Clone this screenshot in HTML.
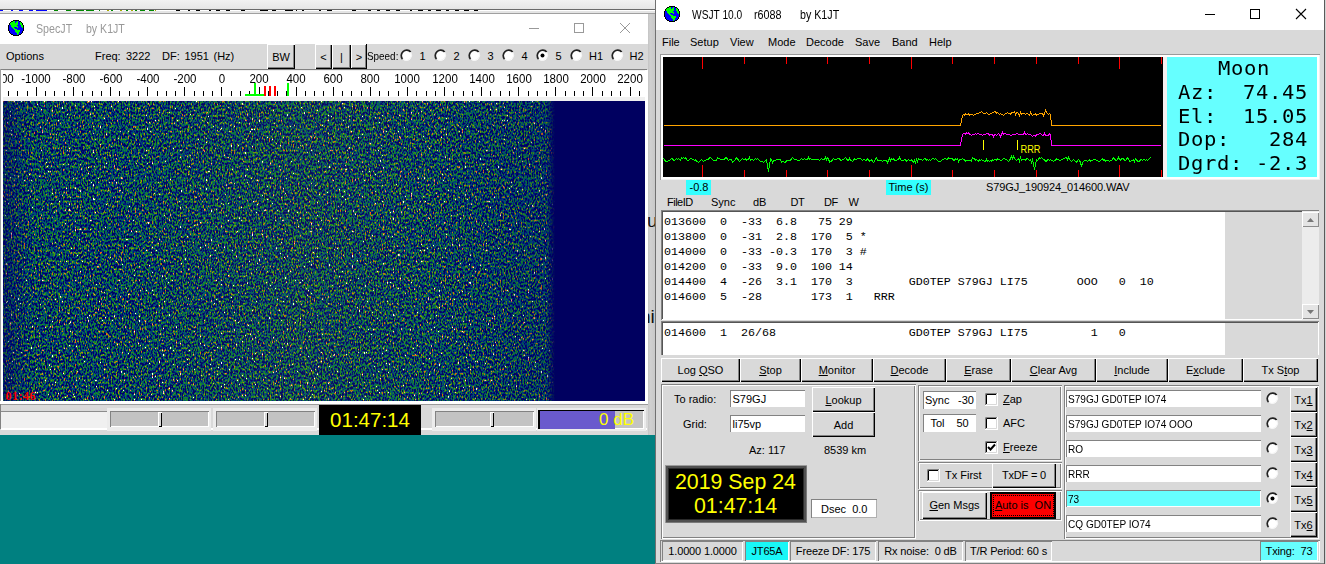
<!DOCTYPE html>
<html><head><meta charset="utf-8"><title>WSJT</title>
<style>
html,body{margin:0;padding:0}
body{width:1326px;height:564px;position:relative;overflow:hidden;background:#f0f0f0;font-family:"Liberation Sans",sans-serif;font-size:12px;color:#000}
body div,body svg{position:absolute;box-sizing:border-box}
.t{white-space:pre;line-height:1}
.b{display:flex;align-items:center;justify-content:center;white-space:pre;font-size:11px}
u{text-decoration:underline}
</style></head><body>

<div style="left:0px;top:435px;width:655px;height:129px;background:#008080"></div>
<div style="left:0px;top:0px;width:655px;height:9px;background:linear-gradient(#f2f2f2,#e6e6e6)"></div>
<div style="left:0px;top:9px;width:655px;height:1px;background:#6a6a6a"></div>
<div style="left:0px;top:10px;width:655px;height:1px;background:#fff"></div>
<div style="left:0px;top:11px;width:655px;height:2px;background:#e4e4e4"></div>
<div style="left:0px;top:13px;width:655px;height:1px;background:#a0a0a0"></div>
<div style="left:0px;top:10px;width:3px;height:1px;background:#00f"></div>
<div style="left:11px;top:10px;width:2px;height:1px;background:#00f"></div>
<div style="left:19px;top:10px;width:4px;height:1px;background:#00f"></div>
<div style="left:29px;top:10px;width:4px;height:1px;background:#00f"></div>
<div style="left:36px;top:10px;width:11px;height:1px;background:#00f"></div>
<div style="left:54px;top:10px;width:4px;height:1px;background:#080"></div>
<div style="left:66px;top:10px;width:5px;height:1px;background:#080"></div>
<div style="left:76px;top:10px;width:8px;height:1px;background:#080"></div>
<div style="left:86px;top:10px;width:8px;height:1px;background:#080"></div>
<div style="left:99px;top:10px;width:1px;height:1px;background:#080"></div>
<div style="left:107px;top:10px;width:2px;height:1px;background:#aa0"></div>
<div style="left:111px;top:10px;width:2px;height:1px;background:#080"></div>
<div style="left:120px;top:10px;width:2px;height:1px;background:#aa0"></div>
<div style="left:126px;top:10px;width:2px;height:1px;background:#080"></div>
<div style="left:131px;top:10px;width:2px;height:1px;background:#aa0"></div>
<div style="left:135px;top:10px;width:2px;height:1px;background:#080"></div>
<div style="left:140px;top:10px;width:5px;height:1px;background:#080"></div>
<div style="left:149px;top:10px;width:5px;height:1px;background:#080"></div>
<div style="left:155px;top:10px;width:1px;height:1px;background:#aa0"></div>
<div style="left:176px;top:10px;width:4px;height:1px;background:#000"></div>
<div style="left:188px;top:10px;width:2px;height:1px;background:#000"></div>
<div style="left:196px;top:10px;width:4px;height:1px;background:#000"></div>
<div style="left:209px;top:10px;width:2px;height:1px;background:#000"></div>
<div style="left:216px;top:10px;width:4px;height:1px;background:#000"></div>
<div style="left:226px;top:10px;width:4px;height:1px;background:#000"></div>
<div style="left:241px;top:10px;width:4px;height:1px;background:#000"></div>
<div style="left:260px;top:10px;width:8px;height:1px;background:#000"></div>
<div style="left:272px;top:10px;width:4px;height:1px;background:#000"></div>
<div style="left:285px;top:10px;width:8px;height:1px;background:#000"></div>
<div style="left:296px;top:10px;width:1px;height:1px;background:#000"></div>
<div style="left:302px;top:10px;width:2px;height:1px;background:#000"></div>
<div style="left:319px;top:10px;width:2px;height:1px;background:#000"></div>
<div style="left:327px;top:10px;width:5px;height:1px;background:#000"></div>
<div style="left:352px;top:10px;width:4px;height:1px;background:#000"></div>
<div style="left:368px;top:10px;width:3px;height:1px;background:#000"></div>
<div style="left:377px;top:10px;width:3px;height:1px;background:#000"></div>
<div style="left:386px;top:10px;width:4px;height:1px;background:#000"></div>
<div style="left:396px;top:10px;width:4px;height:1px;background:#000"></div>
<div style="left:410px;top:10px;width:2px;height:1px;background:#000"></div>
<div style="left:418px;top:10px;width:5px;height:1px;background:#000"></div>
<div style="left:428px;top:10px;width:3px;height:1px;background:#000"></div>
<div style="left:436px;top:10px;width:5px;height:1px;background:#000"></div>
<div style="left:446px;top:10px;width:3px;height:1px;background:#000"></div>
<div style="left:455px;top:10px;width:4px;height:1px;background:#000"></div>
<div style="left:464px;top:10px;width:5px;height:1px;background:#000"></div>
<div style="left:474px;top:10px;width:4px;height:1px;background:#000"></div>
<div style="left:0px;top:14px;width:648px;height:421px;background:#d9d9d9"></div>
<div style="left:0px;top:14px;width:648px;height:30px;background:#fff"></div>
<svg style="left:8px;top:20px" width="16" height="16" viewBox="0 0 16 16" shape-rendering="crispEdges"><path d="M5 0h6v1h-6zM3 1h2v1h-2zM11 1h2v1h-2zM2 2h1v1h-1zM13 2h1v1h-1zM1 3h1v1h-1zM14 3h1v1h-1zM1 4h1v1h-1zM14 4h1v1h-1zM0 5h1v1h-1zM15 5h1v1h-1zM0 6h1v1h-1zM15 6h1v1h-1zM0 7h1v1h-1zM15 7h1v1h-1zM0 8h1v1h-1zM15 8h1v1h-1zM0 9h1v1h-1zM15 9h1v1h-1zM0 10h1v1h-1zM15 10h1v1h-1zM1 11h1v1h-1zM14 11h1v1h-1zM1 12h1v1h-1zM14 12h1v1h-1zM2 13h1v1h-1zM13 13h1v1h-1zM3 14h2v1h-2zM11 14h2v1h-2zM5 15h6v1h-6z" fill="#000"/><path d="M5 1h2v1h-2zM9 1h1v1h-1zM3 2h4v1h-4zM8 2h2v1h-2zM12 2h1v1h-1zM2 3h8v1h-8zM12 3h2v1h-2zM2 4h8v1h-8zM12 4h2v1h-2zM3 5h6v1h-6zM13 5h2v1h-2zM3 6h7v1h-7zM13 6h2v1h-2zM4 7h2v1h-2zM9 7h1v1h-1zM14 7h1v1h-1zM5 8h2v1h-2zM6 9h3v1h-3zM7 10h5v1h-5zM7 11h5v1h-5zM8 12h3v1h-3zM9 13h2v1h-2zM9 14h1v1h-1z" fill="#00ff00"/><path d="M7 1h2v1h-2zM10 1h1v1h-1zM7 2h1v1h-1zM10 2h2v1h-2zM10 3h2v1h-2zM10 4h2v1h-2zM1 5h2v1h-2zM9 5h4v1h-4zM1 6h2v1h-2zM10 6h3v1h-3zM1 7h3v1h-3zM6 7h3v1h-3zM10 7h4v1h-4zM1 8h4v1h-4zM7 8h8v1h-8zM1 9h5v1h-5zM9 9h6v1h-6zM1 10h6v1h-6zM12 10h3v1h-3zM2 11h5v1h-5zM12 11h2v1h-2zM2 12h6v1h-6zM11 12h3v1h-3zM3 13h6v1h-6zM11 13h2v1h-2zM5 14h4v1h-4zM10 14h1v1h-1z" fill="#0000ff"/></svg>
<div class="t" style="left:36px;top:23px;font-size:12px;color:#999;transform:scaleX(0.89);transform-origin:0 0">SpecJT</div>
<div class="t" style="left:85.5px;top:23px;font-size:12px;color:#999;transform:scaleX(0.88);transform-origin:0 0">by K1JT</div>
<svg style="left:520px;top:14px" width="126" height="30" viewBox="0 0 126 30"><path d="M9 14.5 H19" stroke="#999" stroke-width="1"/><rect x="54.5" y="9.5" width="9" height="9" fill="none" stroke="#999"/><path d="M100 9 L110 19 M110 9 L100 19" stroke="#999" stroke-width="1"/></svg>
<div class="t" style="left:6px;top:51px;font-size:11px;color:#000;">Options</div>
<div class="t" style="left:95px;top:51px;font-size:11px;color:#000;">Freq:</div>
<div class="t" style="left:126px;top:51px;font-size:11px;color:#000;">3222</div>
<div class="t" style="left:162px;top:51px;font-size:11px;color:#000;">DF:</div>
<div class="t" style="left:184.5px;top:51px;font-size:11px;color:#000;">1951</div>
<div class="t" style="left:213.5px;top:51px;font-size:11px;color:#000;">(Hz)</div>
<div class="b" style="left:267px;top:44px;width:28px;height:25px;background:#d9d9d9;box-shadow:inset 1px 1px 0 #fff, inset -1px -1px 0 #000, inset -2px -2px 0 #828282;">BW</div>
<div class="b" style="left:315px;top:44px;width:17px;height:25px;background:#d9d9d9;box-shadow:inset 1px 1px 0 #fff, inset -1px -1px 0 #000, inset -2px -2px 0 #828282;">&lt;</div>
<div class="b" style="left:332px;top:44px;width:19px;height:25px;background:#d9d9d9;box-shadow:inset 1px 1px 0 #fff, inset -1px -1px 0 #000, inset -2px -2px 0 #828282;">|</div>
<div class="b" style="left:351px;top:44px;width:16px;height:25px;background:#d9d9d9;box-shadow:inset 1px 1px 0 #fff, inset -1px -1px 0 #000, inset -2px -2px 0 #828282;">&gt;</div>
<div class="t" style="left:366.5px;top:51px;font-size:11px;color:#000;transform:scaleX(0.9);transform-origin:0 0">Speed:</div>
<div style="left:351px;top:44px;width:16px;height:25px;box-shadow:inset -1px -1px 0 #000"></div>
<svg style="left:400px;top:49px" width="13" height="13" viewBox="0 0 13 13"><circle cx="6.5" cy="6.5" r="5.2" fill="#fff"/><path d="M10.7 3.0 A5.2 5.2 0 0 0 2.6 10.2" fill="none" stroke="#222" stroke-width="1.7"/><path d="M10.7 3.0 A5.5 5.5 0 0 1 2.6 10.2" fill="none" stroke="#f6f6f6" stroke-width="1"/></svg>
<div class="t" style="left:419.5px;top:51px;font-size:11px;color:#000;">1</div>
<svg style="left:434px;top:49px" width="13" height="13" viewBox="0 0 13 13"><circle cx="6.5" cy="6.5" r="5.2" fill="#fff"/><path d="M10.7 3.0 A5.2 5.2 0 0 0 2.6 10.2" fill="none" stroke="#222" stroke-width="1.7"/><path d="M10.7 3.0 A5.5 5.5 0 0 1 2.6 10.2" fill="none" stroke="#f6f6f6" stroke-width="1"/></svg>
<div class="t" style="left:453.5px;top:51px;font-size:11px;color:#000;">2</div>
<svg style="left:468px;top:49px" width="13" height="13" viewBox="0 0 13 13"><circle cx="6.5" cy="6.5" r="5.2" fill="#fff"/><path d="M10.7 3.0 A5.2 5.2 0 0 0 2.6 10.2" fill="none" stroke="#222" stroke-width="1.7"/><path d="M10.7 3.0 A5.5 5.5 0 0 1 2.6 10.2" fill="none" stroke="#f6f6f6" stroke-width="1"/></svg>
<div class="t" style="left:487.5px;top:51px;font-size:11px;color:#000;">3</div>
<svg style="left:502px;top:49px" width="13" height="13" viewBox="0 0 13 13"><circle cx="6.5" cy="6.5" r="5.2" fill="#fff"/><path d="M10.7 3.0 A5.2 5.2 0 0 0 2.6 10.2" fill="none" stroke="#222" stroke-width="1.7"/><path d="M10.7 3.0 A5.5 5.5 0 0 1 2.6 10.2" fill="none" stroke="#f6f6f6" stroke-width="1"/></svg>
<div class="t" style="left:521.5px;top:51px;font-size:11px;color:#000;">4</div>
<svg style="left:536px;top:49px" width="13" height="13" viewBox="0 0 13 13"><circle cx="6.5" cy="6.5" r="5.2" fill="#fff"/><path d="M10.7 3.0 A5.2 5.2 0 0 0 2.6 10.2" fill="none" stroke="#222" stroke-width="1.7"/><path d="M10.7 3.0 A5.5 5.5 0 0 1 2.6 10.2" fill="none" stroke="#f6f6f6" stroke-width="1"/><circle cx="6.5" cy="6.5" r="2" fill="#000"/></svg>
<div class="t" style="left:555.5px;top:51px;font-size:11px;color:#000;">5</div>
<svg style="left:570px;top:49px" width="13" height="13" viewBox="0 0 13 13"><circle cx="6.5" cy="6.5" r="5.2" fill="#fff"/><path d="M10.7 3.0 A5.2 5.2 0 0 0 2.6 10.2" fill="none" stroke="#222" stroke-width="1.7"/><path d="M10.7 3.0 A5.5 5.5 0 0 1 2.6 10.2" fill="none" stroke="#f6f6f6" stroke-width="1"/></svg>
<div class="t" style="left:589px;top:51px;font-size:11px;color:#000;">H1</div>
<svg style="left:611px;top:49px" width="13" height="13" viewBox="0 0 13 13"><circle cx="6.5" cy="6.5" r="5.2" fill="#fff"/><path d="M10.7 3.0 A5.2 5.2 0 0 0 2.6 10.2" fill="none" stroke="#222" stroke-width="1.7"/><path d="M10.7 3.0 A5.5 5.5 0 0 1 2.6 10.2" fill="none" stroke="#f6f6f6" stroke-width="1"/></svg>
<div class="t" style="left:629.5px;top:51px;font-size:11px;color:#000;">H2</div>
<div style="left:0px;top:69px;width:647px;height:1px;background:#828282"></div>
<div style="left:0px;top:69px;width:1px;height:335px;background:#a0a0a0"></div>
<div style="left:1px;top:70px;width:2px;height:331px;background:#fff"></div>
<div style="left:2px;top:70px;width:645px;height:27px;background:#fff"></div>
<div style="left:3px;top:70px;width:644px;height:1px;background:#f0f0f0"></div>
<div style="left:645px;top:70px;width:3px;height:331px;background:#fff"></div>
<div style="left:3px;top:97px;width:642px;height:4px;background:#f0f0f0"></div>
<svg style="left:0;top:70px" width="647" height="31" viewBox="0 0 647 31" shape-rendering="crispEdges"><path d="M8.5 21 V26 M17.5 21 V26 M27.5 21 V26 M36.5 17 V26 M45.5 21 V26 M54.5 21 V26 M64.5 21 V26 M73.5 17 V26 M82.5 21 V26 M92.5 21 V26 M101.5 21 V26 M110.5 17 V26 M119.5 21 V26 M129.5 21 V26 M138.5 21 V26 M147.5 17 V26 M157.5 21 V26 M166.5 21 V26 M175.5 21 V26 M184.5 17 V26 M194.5 21 V26 M203.5 21 V26 M212.5 21 V26 M221.5 17 V26 M231.5 21 V26 M240.5 21 V26 M249.5 21 V26 M259.5 17 V26 M268.5 21 V26 M277.5 21 V26 M286.5 21 V26 M296.5 17 V26 M305.5 21 V26 M314.5 21 V26 M323.5 21 V26 M333.5 17 V26 M342.5 21 V26 M351.5 21 V26 M361.5 21 V26 M370.5 17 V26 M379.5 21 V26 M388.5 21 V26 M398.5 21 V26 M407.5 17 V26 M416.5 21 V26 M426.5 21 V26 M435.5 21 V26 M444.5 17 V26 M453.5 21 V26 M463.5 21 V26 M472.5 21 V26 M481.5 17 V26 M490.5 21 V26 M500.5 21 V26 M509.5 21 V26 M518.5 17 V26 M528.5 21 V26 M537.5 21 V26 M546.5 21 V26 M555.5 17 V26 M565.5 21 V26 M574.5 21 V26 M583.5 21 V26 M592.5 17 V26 M602.5 21 V26 M611.5 21 V26 M620.5 21 V26 M630.5 17 V26 M639.5 21 V26" stroke="#000" stroke-width="1" fill="none"/><path d="M245 24h19v2h-19z M254 13h2v13h-2z M287 13h2v13h-2z" fill="#00ff00"/><path d="M264 16h2v10h-2z M269 16h2v10h-2z M274 16h2v10h-2z" fill="#f00"/></svg>
<div style="left:3px;top:0;width:40px;height:90px;overflow:hidden"><div style="left:-3px;top:0"><div class="t" style="left:-30.7px;top:72.5px;width:60px;text-align:center;font-size:12.5px;transform:scaleX(0.92)">-1200</div></div></div>
<div class="t" style="left:6.4px;top:72.5px;width:60px;text-align:center;font-size:12.5px;transform:scaleX(0.92)">-1000</div>
<div class="t" style="left:43.5px;top:72.5px;width:60px;text-align:center;font-size:12.5px;transform:scaleX(0.92)">-800</div>
<div class="t" style="left:80.6px;top:72.5px;width:60px;text-align:center;font-size:12.5px;transform:scaleX(0.92)">-600</div>
<div class="t" style="left:117.8px;top:72.5px;width:60px;text-align:center;font-size:12.5px;transform:scaleX(0.92)">-400</div>
<div class="t" style="left:154.8px;top:72.5px;width:60px;text-align:center;font-size:12.5px;transform:scaleX(0.92)">-200</div>
<div class="t" style="left:191.9px;top:72.5px;width:60px;text-align:center;font-size:12.5px;transform:scaleX(0.92)">0</div>
<div class="t" style="left:229.1px;top:72.5px;width:60px;text-align:center;font-size:12.5px;transform:scaleX(0.92)">200</div>
<div class="t" style="left:266.1px;top:72.5px;width:60px;text-align:center;font-size:12.5px;transform:scaleX(0.92)">400</div>
<div class="t" style="left:303.2px;top:72.5px;width:60px;text-align:center;font-size:12.5px;transform:scaleX(0.92)">600</div>
<div class="t" style="left:340.4px;top:72.5px;width:60px;text-align:center;font-size:12.5px;transform:scaleX(0.92)">800</div>
<div class="t" style="left:377.4px;top:72.5px;width:60px;text-align:center;font-size:12.5px;transform:scaleX(0.92)">1000</div>
<div class="t" style="left:414.6px;top:72.5px;width:60px;text-align:center;font-size:12.5px;transform:scaleX(0.92)">1200</div>
<div class="t" style="left:451.6px;top:72.5px;width:60px;text-align:center;font-size:12.5px;transform:scaleX(0.92)">1400</div>
<div class="t" style="left:488.8px;top:72.5px;width:60px;text-align:center;font-size:12.5px;transform:scaleX(0.92)">1600</div>
<div class="t" style="left:525.9px;top:72.5px;width:60px;text-align:center;font-size:12.5px;transform:scaleX(0.92)">1800</div>
<div class="t" style="left:563.0px;top:72.5px;width:60px;text-align:center;font-size:12.5px;transform:scaleX(0.92)">2000</div>
<div class="t" style="left:600.0px;top:72.5px;width:60px;text-align:center;font-size:12.5px;transform:scaleX(0.92)">2200</div>
<svg style="left:3px;top:101px" width="642" height="300" viewBox="0 0 642 300">
<defs>
<filter id="wf" x="0" y="0" width="100%" height="100%" color-interpolation-filters="sRGB">
<feTurbulence type="fractalNoise" baseFrequency="0.61 0.43" numOctaves="1" seed="11" result="a"/>
<feTurbulence type="fractalNoise" baseFrequency="0.83 0.47" numOctaves="1" seed="5" result="b"/>
<feTurbulence type="fractalNoise" baseFrequency="0.71 0.37" numOctaves="1" seed="23" result="c"/>
<feComposite in="a" in2="b" operator="arithmetic" k1="0" k2="0.5" k3="0.5" k4="0" result="ab"/>
<feComposite in="ab" in2="c" operator="arithmetic" k1="0" k2="0.667" k3="0.333" k4="0"/>
<feColorMatrix type="matrix" values="2.94 0 0 0 -0.97  2.94 0 0 0 -0.97  2.94 0 0 0 -0.97  0 0 0 0 1"/>
<feComponentTransfer>
<feFuncR type="table" tableValues="0.000 0.000 0.000 0.000 0.000 0.000 0.000 0.000 0.000 0.000 0.000 0.000 0.012 0.047 0.110 0.216 0.431 0.725 0.961 1.000 1.000"/>
<feFuncG type="table" tableValues="0.000 0.000 0.000 0.000 0.000 0.000 0.000 0.024 0.078 0.165 0.259 0.353 0.439 0.502 0.541 0.573 0.580 0.510 0.333 0.588 1.000"/>
<feFuncB type="table" tableValues="0.392 0.392 0.392 0.392 0.392 0.392 0.392 0.416 0.463 0.502 0.494 0.424 0.298 0.196 0.137 0.098 0.055 0.039 0.078 0.510 1.000"/>
</feComponentTransfer>
</filter>
<linearGradient id="lf" x1="0" x2="1"><stop offset="0" stop-color="#000060" stop-opacity="0"/><stop offset="1" stop-color="#000060" stop-opacity="1"/></linearGradient>
<linearGradient id="le" x1="0" x2="1"><stop offset="0" stop-color="#000060" stop-opacity="0.45"/><stop offset="1" stop-color="#000060" stop-opacity="0"/></linearGradient>
<linearGradient id="lr" x1="0" x2="1"><stop offset="0" stop-color="#000060" stop-opacity="0"/><stop offset="1" stop-color="#000060" stop-opacity="0.22"/></linearGradient>
<linearGradient id="lm" x1="0" x2="1"><stop offset="0" stop-color="#889010" stop-opacity="0"/><stop offset="0.5" stop-color="#889010" stop-opacity="0.09"/><stop offset="1" stop-color="#889010" stop-opacity="0"/></linearGradient>
</defs>
<rect width="642" height="302" fill="#000060"/>
<rect width="556" height="302" filter="url(#wf)"/>
<rect x="0" width="28" height="302" fill="url(#le)"/>
<rect x="430" width="122" height="302" fill="url(#lr)"/>
<rect x="120" width="360" height="302" fill="url(#lm)"/>
<rect x="543" width="9" height="302" fill="url(#lf)"/>
<rect x="552" width="90" height="302" fill="#000060"/>
<text x="2.5" y="299" font-family="Liberation Serif,serif" font-size="12" font-weight="bold" fill="#f00" textLength="30">01:46</text>
</svg>
<div style="left:0px;top:401px;width:648px;height:3px;background:#fff"></div>
<div style="left:0px;top:404px;width:648px;height:1px;background:#9a9a9a"></div>
<div style="left:0px;top:404px;width:1px;height:25px;background:#828282"></div>
<div style="left:1px;top:411px;width:106px;height:1px;background:#8c8c8c"></div>
<div style="left:1px;top:412px;width:106px;height:16px;background:#f0f0f0"></div>
<div style="left:1px;top:428px;width:646px;height:2px;background:#fff"></div>
<div style="left:107px;top:408px;width:104px;height:23px;background:#ececec"></div>
<div style="left:110px;top:411px;width:99px;height:16px;background:#c3c3c3;box-shadow:inset 1px 1px 0 #828282, inset -1px -1px 0 #fff"></div>
<div style="left:158px;top:412px;width:4px;height:15px;background:#d9d9d9;box-shadow:inset 1px 1px 0 #fff, inset -1px -1px 0 #000"></div>
<div style="left:213px;top:408px;width:104px;height:23px;background:#ececec"></div>
<div style="left:216px;top:411px;width:99px;height:16px;background:#c3c3c3;box-shadow:inset 1px 1px 0 #828282, inset -1px -1px 0 #fff"></div>
<div style="left:264px;top:412px;width:4px;height:15px;background:#d9d9d9;box-shadow:inset 1px 1px 0 #fff, inset -1px -1px 0 #000"></div>
<div style="left:432px;top:408px;width:104px;height:23px;background:#ececec"></div>
<div style="left:435px;top:411px;width:99px;height:16px;background:#c3c3c3;box-shadow:inset 1px 1px 0 #828282, inset -1px -1px 0 #fff"></div>
<div style="left:490px;top:412px;width:4px;height:15px;background:#d9d9d9;box-shadow:inset 1px 1px 0 #fff, inset -1px -1px 0 #000"></div>
<div style="left:319px;top:405px;width:102px;height:30px;background:#000"></div>
<div class="t" style="left:319px;top:410px;width:102px;text-align:center;font-size:20.5px;color:#ff0">01:47:14</div>
<div style="left:537px;top:408px;width:109px;height:23px;background:#ececec"></div>
<div style="left:538px;top:410px;width:106px;height:19px;background:#c3c3c3;box-shadow:inset 2px 1px 0 #000, inset -1px -1px 0 #fff"></div>
<div style="left:540px;top:411px;width:75px;height:18px;background:#6a5acd"></div>
<div class="t" style="left:540px;top:411px;width:94px;text-align:right;font-size:17px;color:#ff0">0 dB</div>
<div style="left:648px;top:14px;width:7px;height:421px;background:linear-gradient(90deg,#c4c4c4,#d0d0d0 30%,#c8c8c8);overflow:hidden"><div class="t" style="left:-1px;top:197px;font-size:19px;color:#111">u</div><div class="t" style="left:-8px;top:292.6px;font-size:19px;color:#111">his</div></div>
<div style="left:655px;top:0px;width:1px;height:564px;background:#707070"></div>
<div style="left:656px;top:0px;width:668px;height:564px;background:#d9d9d9"></div>
<div style="left:656px;top:0px;width:668px;height:30px;background:#fff"></div>
<svg style="left:664px;top:6px" width="16" height="16" viewBox="0 0 16 16" shape-rendering="crispEdges"><path d="M5 0h6v1h-6zM3 1h2v1h-2zM11 1h2v1h-2zM2 2h1v1h-1zM13 2h1v1h-1zM1 3h1v1h-1zM14 3h1v1h-1zM1 4h1v1h-1zM14 4h1v1h-1zM0 5h1v1h-1zM15 5h1v1h-1zM0 6h1v1h-1zM15 6h1v1h-1zM0 7h1v1h-1zM15 7h1v1h-1zM0 8h1v1h-1zM15 8h1v1h-1zM0 9h1v1h-1zM15 9h1v1h-1zM0 10h1v1h-1zM15 10h1v1h-1zM1 11h1v1h-1zM14 11h1v1h-1zM1 12h1v1h-1zM14 12h1v1h-1zM2 13h1v1h-1zM13 13h1v1h-1zM3 14h2v1h-2zM11 14h2v1h-2zM5 15h6v1h-6z" fill="#000"/><path d="M5 1h2v1h-2zM9 1h1v1h-1zM3 2h4v1h-4zM8 2h2v1h-2zM12 2h1v1h-1zM2 3h8v1h-8zM12 3h2v1h-2zM2 4h8v1h-8zM12 4h2v1h-2zM3 5h6v1h-6zM13 5h2v1h-2zM3 6h7v1h-7zM13 6h2v1h-2zM4 7h2v1h-2zM9 7h1v1h-1zM14 7h1v1h-1zM5 8h2v1h-2zM6 9h3v1h-3zM7 10h5v1h-5zM7 11h5v1h-5zM8 12h3v1h-3zM9 13h2v1h-2zM9 14h1v1h-1z" fill="#00ff00"/><path d="M7 1h2v1h-2zM10 1h1v1h-1zM7 2h1v1h-1zM10 2h2v1h-2zM10 3h2v1h-2zM10 4h2v1h-2zM1 5h2v1h-2zM9 5h4v1h-4zM1 6h2v1h-2zM10 6h3v1h-3zM1 7h3v1h-3zM6 7h3v1h-3zM10 7h4v1h-4zM1 8h4v1h-4zM7 8h8v1h-8zM1 9h5v1h-5zM9 9h6v1h-6zM1 10h6v1h-6zM12 10h3v1h-3zM2 11h5v1h-5zM12 11h2v1h-2zM2 12h6v1h-6zM11 12h3v1h-3zM3 13h6v1h-6zM11 13h2v1h-2zM5 14h4v1h-4zM10 14h1v1h-1z" fill="#0000ff"/></svg>
<div class="t" style="left:691.5px;top:9px;font-size:12px;color:#000;transform:scaleX(0.85);transform-origin:0 0">WSJT 10.0</div>
<div class="t" style="left:754px;top:9px;font-size:12px;color:#000;transform:scaleX(0.9);transform-origin:0 0">r6088</div>
<div class="t" style="left:800.3px;top:9px;font-size:12px;color:#000;transform:scaleX(0.89);transform-origin:0 0">by K1JT</div>
<svg style="left:1190px;top:0px" width="134" height="30" viewBox="0 0 134 30"><path d="M15 14.5 H25" stroke="#000" stroke-width="1"/><rect x="60.5" y="9.5" width="9" height="9" fill="none" stroke="#000"/><path d="M106 9 L116 19 M116 9 L106 19" stroke="#000" stroke-width="1.1"/></svg>
<div class="t" style="left:662px;top:37px;font-size:11px;color:#000;">File</div>
<div class="t" style="left:690px;top:37px;font-size:11px;color:#000;">Setup</div>
<div class="t" style="left:730px;top:37px;font-size:11px;color:#000;">View</div>
<div class="t" style="left:768px;top:37px;font-size:11px;color:#000;">Mode</div>
<div class="t" style="left:806px;top:37px;font-size:11px;color:#000;">Decode</div>
<div class="t" style="left:855px;top:37px;font-size:11px;color:#000;">Save</div>
<div class="t" style="left:892px;top:37px;font-size:11px;color:#000;">Band</div>
<div class="t" style="left:929px;top:37px;font-size:11px;color:#000;">Help</div>
<div style="left:660px;top:54px;width:660px;height:126px;background:#fff;box-shadow:inset 1px 1px 0 #9a9a9a, inset -1px -1px 0 #f0f0f0"></div>
<svg style="left:663px;top:57px" width="500" height="120" viewBox="0 0 500 120"><rect width="500" height="120" fill="#000"/><path d="M39.5 0 V12 M39.5 108 V120 M81.5 0 V7 M81.5 113 V120 M123.5 0 V7 M123.5 113 V120 M164.5 0 V7 M164.5 113 V120 M206.5 0 V7 M206.5 113 V120 M248.5 0 V12 M248.5 108 V120 M289.5 0 V7 M289.5 113 V120 M331.5 0 V7 M331.5 113 V120 M373.5 0 V7 M373.5 113 V120 M415.5 0 V7 M415.5 113 V120 M456.5 0 V12 M456.5 108 V120 M498.5 0 V7 M498.5 113 V120" stroke="#f00" stroke-width="1" fill="none"/><g shape-rendering="crispEdges"><polyline points="0.5,68.5 297.5,68.5 298.5,63.5 299.5,58.5 300.5,57.5 301.5,58.5 302.5,56.5 303.5,57.5 304.5,57.5 305.5,56.5 306.5,58.5 307.5,57.5 308.5,57.5 309.5,57.5 310.5,58.5 311.5,57.5 312.5,57.5 313.5,56.5 314.5,56.5 315.5,56.5 316.5,55.5 317.5,55.5 318.5,54.5 319.5,55.5 320.5,56.5 321.5,56.5 322.5,56.5 323.5,55.5 324.5,56.5 325.5,57.5 326.5,57.5 327.5,56.5 328.5,56.5 329.5,55.5 330.5,55.5 331.5,54.5 332.5,54.5 333.5,56.5 334.5,55.5 335.5,56.5 336.5,57.5 337.5,56.5 338.5,57.5 339.5,57.5 340.5,58.5 341.5,57.5 342.5,56.5 343.5,56.5 344.5,55.5 345.5,56.5 346.5,56.5 347.5,57.5 348.5,55.5 349.5,55.5 350.5,55.5 351.5,54.5 352.5,57.5 353.5,55.5 354.5,55.5 355.5,56.5 356.5,58.5 357.5,55.5 358.5,57.5 359.5,56.5 360.5,56.5 361.5,56.5 362.5,57.5 363.5,56.5 364.5,56.5 365.5,57.5 366.5,58.5 367.5,55.5 368.5,57.5 369.5,58.5 370.5,57.5 371.5,57.5 372.5,56.5 373.5,58.5 374.5,57.5 375.5,57.5 376.5,56.5 377.5,56.5 378.5,56.5 379.5,56.5 380.5,58.5 381.5,56.5 382.5,53.5 383.5,55.5 384.5,56.5 385.5,57.5 386.5,56.5 387.5,57.5 388.5,68.5 497.5,68.5" fill="none" stroke="#ffa500" stroke-width="1"/><polyline points="0.5,88.5 297.5,88.5 298.5,82.5 299.5,77.5 300.5,76.5 301.5,76.5 302.5,77.5 303.5,75.5 304.5,76.5 305.5,75.5 306.5,77.5 307.5,77.5 308.5,78.5 309.5,77.5 310.5,77.5 311.5,77.5 312.5,76.5 313.5,77.5 314.5,76.5 315.5,76.5 316.5,77.5 317.5,77.5 318.5,77.5 319.5,78.5 320.5,77.5 321.5,77.5 322.5,77.5 323.5,76.5 324.5,76.5 325.5,76.5 326.5,78.5 327.5,77.5 328.5,77.5 329.5,77.5 330.5,79.5 331.5,77.5 332.5,77.5 333.5,78.5 334.5,77.5 335.5,76.5 336.5,77.5 337.5,79.5 338.5,77.5 339.5,75.5 340.5,77.5 341.5,76.5 342.5,76.5 343.5,77.5 344.5,77.5 345.5,77.5 346.5,77.5 347.5,78.5 348.5,78.5 349.5,77.5 350.5,77.5 351.5,77.5 352.5,77.5 353.5,76.5 354.5,76.5 355.5,77.5 356.5,77.5 357.5,77.5 358.5,77.5 359.5,77.5 360.5,77.5 361.5,75.5 362.5,77.5 363.5,77.5 364.5,76.5 365.5,77.5 366.5,77.5 367.5,77.5 368.5,78.5 369.5,79.5 370.5,78.5 371.5,78.5 372.5,79.5 373.5,77.5 374.5,77.5 375.5,77.5 376.5,76.5 377.5,76.5 378.5,77.5 379.5,78.5 380.5,78.5 381.5,76.5 382.5,78.5 383.5,78.5 384.5,78.5 385.5,78.5 386.5,76.5 387.5,77.5 388.5,88.5 497.5,88.5" fill="none" stroke="#ff00ff" stroke-width="1"/><polyline points="0.5,101.5 1.5,102.5 2.5,104.5 3.5,104.5 4.5,104.5 5.5,103.5 6.5,103.5 7.5,102.5 8.5,101.5 9.5,101.5 10.5,103.5 11.5,103.5 12.5,102.5 13.5,101.5 14.5,102.5 15.5,101.5 16.5,102.5 17.5,103.5 18.5,100.5 19.5,101.5 20.5,100.5 21.5,101.5 22.5,100.5 23.5,102.5 24.5,103.5 25.5,103.5 26.5,102.5 27.5,101.5 28.5,101.5 29.5,102.5 30.5,102.5 31.5,103.5 32.5,102.5 33.5,104.5 34.5,104.5 35.5,105.5 36.5,104.5 37.5,103.5 38.5,102.5 39.5,103.5 40.5,104.5 41.5,103.5 42.5,103.5 43.5,102.5 44.5,102.5 45.5,102.5 46.5,100.5 47.5,100.5 48.5,101.5 49.5,102.5 50.5,103.5 51.5,103.5 52.5,103.5 53.5,103.5 54.5,100.5 55.5,101.5 56.5,101.5 57.5,102.5 58.5,102.5 59.5,102.5 60.5,102.5 61.5,102.5 62.5,100.5 63.5,100.5 64.5,102.5 65.5,103.5 66.5,102.5 67.5,102.5 68.5,102.5 69.5,105.5 70.5,104.5 71.5,103.5 72.5,102.5 73.5,100.5 74.5,101.5 75.5,103.5 76.5,104.5 77.5,103.5 78.5,102.5 79.5,101.5 80.5,102.5 81.5,102.5 82.5,101.5 83.5,103.5 84.5,102.5 85.5,102.5 86.5,100.5 87.5,103.5 88.5,102.5 89.5,102.5 90.5,103.5 91.5,102.5 92.5,101.5 93.5,102.5 94.5,101.5 95.5,102.5 96.5,103.5 97.5,104.5 98.5,104.5 99.5,104.5 100.5,105.5 101.5,104.5 102.5,103.5 103.5,102.5 104.5,108.5 105.5,114.5 106.5,108.5 107.5,101.5 108.5,102.5 109.5,105.5 110.5,103.5 111.5,103.5 112.5,103.5 113.5,102.5 114.5,102.5 115.5,102.5 116.5,102.5 117.5,102.5 118.5,105.5 119.5,104.5 120.5,104.5 121.5,105.5 122.5,105.5 123.5,103.5 124.5,103.5 125.5,103.5 126.5,103.5 127.5,103.5 128.5,101.5 129.5,100.5 130.5,101.5 131.5,102.5 132.5,102.5 133.5,102.5 134.5,103.5 135.5,103.5 136.5,103.5 137.5,102.5 138.5,101.5 139.5,102.5 140.5,102.5 141.5,101.5 142.5,102.5 143.5,102.5 144.5,102.5 145.5,100.5 146.5,102.5 147.5,101.5 148.5,102.5 149.5,102.5 150.5,102.5 151.5,102.5 152.5,102.5 153.5,102.5 154.5,102.5 155.5,102.5 156.5,103.5 157.5,102.5 158.5,101.5 159.5,102.5 160.5,102.5 161.5,102.5 162.5,100.5 163.5,102.5 164.5,100.5 165.5,101.5 166.5,105.5 167.5,104.5 168.5,104.5 169.5,102.5 170.5,101.5 171.5,102.5 172.5,102.5 173.5,102.5 174.5,101.5 175.5,101.5 176.5,101.5 177.5,103.5 178.5,103.5 179.5,102.5 180.5,102.5 181.5,101.5 182.5,100.5 183.5,101.5 184.5,103.5 185.5,103.5 186.5,101.5 187.5,103.5 188.5,103.5 189.5,104.5 190.5,103.5 191.5,101.5 192.5,102.5 193.5,102.5 194.5,101.5 195.5,101.5 196.5,101.5 197.5,101.5 198.5,102.5 199.5,103.5 200.5,102.5 201.5,102.5 202.5,103.5 203.5,103.5 204.5,101.5 205.5,102.5 206.5,104.5 207.5,103.5 208.5,102.5 209.5,104.5 210.5,105.5 211.5,104.5 212.5,101.5 213.5,100.5 214.5,103.5 215.5,103.5 216.5,103.5 217.5,103.5 218.5,103.5 219.5,104.5 220.5,103.5 221.5,103.5 222.5,103.5 223.5,103.5 224.5,105.5 225.5,103.5 226.5,101.5 227.5,103.5 228.5,101.5 229.5,102.5 230.5,101.5 231.5,103.5 232.5,103.5 233.5,103.5 234.5,102.5 235.5,102.5 236.5,100.5 237.5,102.5 238.5,103.5 239.5,103.5 240.5,103.5 241.5,102.5 242.5,102.5 243.5,104.5 244.5,103.5 245.5,102.5 246.5,103.5 247.5,103.5 248.5,102.5 249.5,104.5 250.5,105.5 251.5,103.5 252.5,105.5 253.5,102.5 254.5,104.5 255.5,101.5 256.5,102.5 257.5,102.5 258.5,102.5 259.5,103.5 260.5,102.5 261.5,101.5 262.5,101.5 263.5,103.5 264.5,102.5 265.5,103.5 266.5,102.5 267.5,103.5 268.5,102.5 269.5,101.5 270.5,101.5 271.5,102.5 272.5,101.5 273.5,102.5 274.5,103.5 275.5,104.5 276.5,104.5 277.5,104.5 278.5,103.5 279.5,102.5 280.5,102.5 281.5,101.5 282.5,101.5 283.5,102.5 284.5,102.5 285.5,100.5 286.5,101.5 287.5,101.5 288.5,101.5 289.5,101.5 290.5,103.5 291.5,103.5 292.5,101.5 293.5,102.5 294.5,101.5 295.5,104.5 296.5,102.5 297.5,102.5 298.5,102.5 299.5,101.5 300.5,102.5 301.5,102.5 302.5,104.5 303.5,103.5 304.5,103.5 305.5,103.5 306.5,103.5 307.5,103.5 308.5,104.5 309.5,100.5 310.5,101.5 311.5,101.5 312.5,103.5 313.5,102.5 314.5,103.5 315.5,104.5 316.5,102.5 317.5,103.5 318.5,102.5 319.5,103.5 320.5,103.5 321.5,104.5 322.5,104.5 323.5,102.5 324.5,104.5 325.5,103.5 326.5,104.5 327.5,103.5 328.5,104.5 329.5,102.5 330.5,103.5 331.5,102.5 332.5,102.5 333.5,103.5 334.5,101.5 335.5,102.5 336.5,102.5 337.5,103.5 338.5,103.5 339.5,102.5 340.5,101.5 341.5,101.5 342.5,102.5 343.5,102.5 344.5,103.5 345.5,104.5 346.5,103.5 347.5,101.5 348.5,99.5 349.5,101.5 350.5,99.5 351.5,101.5 352.5,102.5 353.5,103.5 354.5,102.5 355.5,101.5 356.5,104.5 357.5,100.5 358.5,103.5 359.5,102.5 360.5,102.5 361.5,102.5 362.5,103.5 363.5,101.5 364.5,101.5 365.5,102.5 366.5,103.5 367.5,102.5 368.5,105.5 369.5,102.5 370.5,107.5 371.5,112.5 372.5,107.5 373.5,102.5 374.5,103.5 375.5,102.5 376.5,100.5 377.5,101.5 378.5,100.5 379.5,101.5 380.5,102.5 381.5,102.5 382.5,104.5 383.5,104.5 384.5,102.5 385.5,102.5 386.5,103.5 387.5,102.5 388.5,103.5 389.5,103.5 390.5,104.5 391.5,103.5 392.5,103.5 393.5,101.5 394.5,102.5 395.5,102.5 396.5,103.5 397.5,103.5 398.5,102.5 399.5,102.5 400.5,101.5 401.5,101.5 402.5,100.5 403.5,100.5 404.5,102.5 405.5,100.5 406.5,102.5 407.5,103.5 408.5,104.5 409.5,103.5 410.5,102.5 411.5,103.5 412.5,104.5 413.5,105.5 414.5,103.5 415.5,102.5 416.5,103.5 417.5,105.5 418.5,109.5 419.5,105.5 420.5,104.5 421.5,103.5 422.5,103.5 423.5,103.5 424.5,104.5 425.5,103.5 426.5,102.5 427.5,104.5 428.5,103.5 429.5,103.5 430.5,102.5 431.5,102.5 432.5,102.5 433.5,103.5 434.5,103.5 435.5,104.5 436.5,104.5 437.5,103.5 438.5,102.5 439.5,101.5 440.5,103.5 441.5,102.5 442.5,104.5 443.5,103.5 444.5,103.5 445.5,103.5 446.5,104.5 447.5,103.5 448.5,103.5 449.5,102.5 450.5,100.5 451.5,101.5 452.5,103.5 453.5,103.5 454.5,102.5 455.5,100.5 456.5,102.5 457.5,103.5 458.5,101.5 459.5,101.5 460.5,101.5 461.5,103.5 462.5,103.5 463.5,102.5 464.5,100.5 465.5,101.5 466.5,104.5 467.5,104.5 468.5,103.5 469.5,103.5 470.5,102.5 471.5,104.5 472.5,101.5 473.5,102.5 474.5,104.5 475.5,104.5 476.5,104.5 477.5,102.5 478.5,102.5 479.5,103.5 480.5,102.5 481.5,102.5 482.5,103.5 483.5,102.5 484.5,103.5 485.5,102.5 486.5,101.5 487.5,100.5" fill="none" stroke="#00ff00" stroke-width="1"/></g><path d="M320.5 83 V93 M354.5 83 V93" stroke="#ff0" stroke-width="1" fill="none"/><text x="357.5" y="96" font-family="Liberation Sans,sans-serif" font-size="11" fill="#ff0" textLength="20" lengthAdjust="spacingAndGlyphs">RRR</text></svg>
<div style="left:1163px;top:57px;width:4px;height:120px;background:#f4f0f0"></div>
<div style="left:1167px;top:57px;width:150px;height:120px;background:#66ffff"></div>
<div class="t" style="left:1218px;top:59.0px;font-family:'DejaVu Sans Mono','Liberation Mono',monospace;font-size:19px;letter-spacing:0.6px;transform:scaleX(1.08);transform-origin:0 0">Moon</div>
<div class="t" style="left:1178px;top:82.75px;font-family:'DejaVu Sans Mono','Liberation Mono',monospace;font-size:19px;letter-spacing:0.6px;transform:scaleX(1.08);transform-origin:0 0">Az:  74.45</div>
<div class="t" style="left:1178px;top:106.5px;font-family:'DejaVu Sans Mono','Liberation Mono',monospace;font-size:19px;letter-spacing:0.6px;transform:scaleX(1.08);transform-origin:0 0">El:  15.05</div>
<div class="t" style="left:1178px;top:130.25px;font-family:'DejaVu Sans Mono','Liberation Mono',monospace;font-size:19px;letter-spacing:0.6px;transform:scaleX(1.08);transform-origin:0 0">Dop:   284</div>
<div class="t" style="left:1178px;top:154.0px;font-family:'DejaVu Sans Mono','Liberation Mono',monospace;font-size:19px;letter-spacing:0.6px;transform:scaleX(1.08);transform-origin:0 0">Dgrd: -2.3</div>
<div style="left:686px;top:180px;width:25px;height:15px;background:#33ffff"></div>
<div class="t" style="left:689.5px;top:182px;font-size:11px;color:#000;">-0.8</div>
<div style="left:886px;top:180px;width:45px;height:15px;background:#33ffff"></div>
<div class="t" style="left:888.5px;top:182px;font-size:11px;color:#000;">Time (s)</div>
<div class="t" style="left:986px;top:182px;font-size:11px;color:#000;letter-spacing:-0.12px">S79GJ_190924_014600.WAV</div>
<div class="t" style="left:667px;top:197px;font-size:11px;color:#000;letter-spacing:-0.5px">FileID</div>
<div class="t" style="left:711px;top:197px;font-size:11px;color:#000;letter-spacing:0px">Sync</div>
<div class="t" style="left:753px;top:197px;font-size:11px;color:#000;letter-spacing:0px">dB</div>
<div class="t" style="left:790.5px;top:197px;font-size:11px;color:#000;letter-spacing:-0.5px">DT</div>
<div class="t" style="left:824px;top:197px;font-size:11px;color:#000;letter-spacing:-0.5px">DF</div>
<div class="t" style="left:848.5px;top:197px;font-size:11px;color:#000;letter-spacing:0px">W</div>
<div style="left:661px;top:210px;width:658px;height:110px;background:#d9d9d9;box-shadow:inset 1px 1px 0 #828282, inset -1px -1px 0 #fff, inset 2px 2px 0 #555"></div>
<div style="left:663px;top:212px;width:562px;height:107px;background:#fff"></div>
<div style="left:661px;top:321px;width:658px;height:34px;background:#d9d9d9;box-shadow:inset 1px 1px 0 #828282, inset -1px 0 0 #fff, inset 2px 2px 0 #555"></div>
<div style="left:663px;top:323px;width:562px;height:32px;background:#fff"></div>
<div class="t" style="left:664px;top:217px;font-family:'Liberation Mono',monospace;font-size:11.667px">013600  0  -33  6.8   75 29</div>
<div class="t" style="left:664px;top:232px;font-family:'Liberation Mono',monospace;font-size:11.667px">013800  0  -31  2.8  170  5 *</div>
<div class="t" style="left:664px;top:247px;font-family:'Liberation Mono',monospace;font-size:11.667px">014000  0  -33 -0.3  170  3 #</div>
<div class="t" style="left:664px;top:262px;font-family:'Liberation Mono',monospace;font-size:11.667px">014200  0  -33  9.0  100 14</div>
<div class="t" style="left:664px;top:277px;font-family:'Liberation Mono',monospace;font-size:11.667px">014400  4  -26  3.1  170  3        GD0TEP S79GJ LI75       OOO   0  10</div>
<div class="t" style="left:664px;top:292px;font-family:'Liberation Mono',monospace;font-size:11.667px">014600  5  -28       173  1   RRR</div>
<div class="t" style="left:664px;top:328px;font-family:'Liberation Mono',monospace;font-size:11.667px">014600  1  26/68                   GD0TEP S79GJ LI75         1   0</div>
<div style="left:1302px;top:211px;width:17px;height:109px;background:#ececec"></div>
<div class="b" style="left:1302px;top:212px;width:17px;height:15px;background:#e4e4e4;box-shadow:inset 1px 1px 0 #fff, inset -1px -1px 0 #8c8c8c;"><svg style="position:static" width="7" height="4" viewBox="0 0 7 4"><path d="M0 4 L3.5 0 L7 4Z" fill="#777"/></svg></div>
<div class="b" style="left:1302px;top:304px;width:17px;height:15px;background:#e4e4e4;box-shadow:inset 1px 1px 0 #fff, inset -1px -1px 0 #8c8c8c;"><svg style="position:static" width="7" height="4" viewBox="0 0 7 4"><path d="M0 0 L3.5 4 L7 0Z" fill="#777"/></svg></div>
<div class="b" style="left:661px;top:358px;width:79px;height:24px;background:#d9d9d9;box-shadow:inset 1px 1px 0 #fff, inset -1px -1px 0 #000, inset -2px -2px 0 #828282;font-size:11px;padding-bottom:1px">Log <u>Q</u>SO</div>
<div class="b" style="left:740px;top:358px;width:61px;height:24px;background:#d9d9d9;box-shadow:inset 1px 1px 0 #fff, inset -1px -1px 0 #000, inset -2px -2px 0 #828282;font-size:11px;padding-bottom:1px"><u>S</u>top</div>
<div class="b" style="left:801px;top:358px;width:72px;height:24px;background:#d9d9d9;box-shadow:inset 1px 1px 0 #fff, inset -1px -1px 0 #000, inset -2px -2px 0 #828282;font-size:11px;padding-bottom:1px"><u>M</u>onitor</div>
<div class="b" style="left:873px;top:358px;width:73px;height:24px;background:#d9d9d9;box-shadow:inset 1px 1px 0 #fff, inset -1px -1px 0 #000, inset -2px -2px 0 #828282;font-size:11px;padding-bottom:1px"><u>D</u>ecode</div>
<div class="b" style="left:946px;top:358px;width:65px;height:24px;background:#d9d9d9;box-shadow:inset 1px 1px 0 #fff, inset -1px -1px 0 #000, inset -2px -2px 0 #828282;font-size:11px;padding-bottom:1px"><u>E</u>rase</div>
<div class="b" style="left:1011px;top:358px;width:85px;height:24px;background:#d9d9d9;box-shadow:inset 1px 1px 0 #fff, inset -1px -1px 0 #000, inset -2px -2px 0 #828282;font-size:11px;padding-bottom:1px"><u>C</u>lear Avg</div>
<div class="b" style="left:1096px;top:358px;width:72px;height:24px;background:#d9d9d9;box-shadow:inset 1px 1px 0 #fff, inset -1px -1px 0 #000, inset -2px -2px 0 #828282;font-size:11px;padding-bottom:1px"><u>I</u>nclude</div>
<div class="b" style="left:1168px;top:358px;width:75px;height:24px;background:#d9d9d9;box-shadow:inset 1px 1px 0 #fff, inset -1px -1px 0 #000, inset -2px -2px 0 #828282;font-size:11px;padding-bottom:1px">E<u>x</u>clude</div>
<div class="b" style="left:1243px;top:358px;width:75px;height:24px;background:#d9d9d9;box-shadow:inset 1px 1px 0 #fff, inset -1px -1px 0 #000, inset -2px -2px 0 #828282;font-size:11px;padding-bottom:1px">Tx S<u>t</u>op</div>
<div style="left:661px;top:384px;width:255px;height:155px;box-shadow:inset 1px 1px 0 #828282, inset -1px -1px 0 #fff, inset 2px 2px 0 #fff, inset -2px -2px 0 #828282;"></div>
<div class="t" style="left:674px;top:394px;font-size:11px;color:#000;">To radio:</div>
<div style="left:730px;top:390px;width:75px;height:17px;background:#fff;box-shadow:inset 1px 1px 0 #828282, inset -1px -1px 0 #fff;"><div class="t" style="left:2.5px;top:4px;font-size:11px">S79GJ</div></div>
<div class="t" style="left:683px;top:419px;font-size:11px;color:#000;">Grid:</div>
<div style="left:730px;top:415px;width:75px;height:17px;background:#fff;box-shadow:inset 1px 1px 0 #828282, inset -1px -1px 0 #fff;"><div class="t" style="left:2.5px;top:4px;font-size:11px">li75vp</div></div>
<div class="b" style="left:812px;top:387px;width:63px;height:25px;background:#d9d9d9;box-shadow:inset 1px 1px 0 #fff, inset -1px -1px 0 #000, inset -2px -2px 0 #828282;font-size:11px"><u>L</u>ookup</div>
<div class="b" style="left:812px;top:412px;width:63px;height:25px;background:#d9d9d9;box-shadow:inset 1px 1px 0 #fff, inset -1px -1px 0 #000, inset -2px -2px 0 #828282;font-size:11px">Add</div>
<div class="t" style="left:749px;top:445px;font-size:11px;color:#000;">Az: 117</div>
<div class="t" style="left:824px;top:445px;font-size:11px;color:#000;">8539 km</div>
<div style="left:665px;top:465px;width:142px;height:58px;background:#000;box-shadow:inset 1px 1px 0 #9a9a9a, inset -1px -1px 0 #7a7a7a, inset 3px 3px 0 #505050, inset -3px -3px 0 #505050, inset 4px 4px 0 #2a2a2a, inset -4px -4px 0 #2a2a2a"></div>
<div class="t" style="left:664px;top:472px;width:143px;text-align:center;font-size:21.33px;color:#ff0">2019 Sep 24</div>
<div class="t" style="left:664px;top:496px;width:143px;text-align:center;font-size:21.33px;color:#ff0">01:47:14</div>
<div style="left:811px;top:499px;width:66px;height:19px;background:#fff;box-shadow:inset 1px 1px 0 #828282, inset -1px -1px 0 #b0b0b0"><div class="t" style="left:10px;top:5px;font-size:11px">Dsec  0.0</div></div>
<div style="left:918px;top:385px;width:144px;height:76px;box-shadow:inset 1px 1px 0 #828282, inset -1px -1px 0 #fff, inset 2px 2px 0 #fff, inset -2px -2px 0 #828282;"></div>
<div style="left:918px;top:462px;width:144px;height:27px;box-shadow:inset 1px 1px 0 #828282, inset -1px -1px 0 #fff, inset 2px 2px 0 #fff, inset -2px -2px 0 #828282;"></div>
<div style="left:918px;top:490px;width:144px;height:31px;box-shadow:inset 1px 1px 0 #828282, inset -1px -1px 0 #fff, inset 2px 2px 0 #fff, inset -2px -2px 0 #828282;"></div>
<div style="left:923px;top:391px;width:53px;height:18px;background:#fff;box-shadow:inset 1px 1px 0 #828282, inset -1px -1px 0 #fff;"><div class="t" style="left:2px;top:4px;font-size:11px">Sync</div><div class="t" style="left:35px;top:4px;font-size:11px">-30</div></div>
<div style="left:923px;top:414px;width:53px;height:18px;background:#fff;box-shadow:inset 1px 1px 0 #828282, inset -1px -1px 0 #fff;"><div class="t" style="left:7.5px;top:4px;font-size:11px">Tol</div><div class="t" style="left:33.5px;top:4px;font-size:11px">50</div></div>
<svg style="left:985px;top:393px" width="13" height="13" viewBox="0 0 13 13"><rect x="0" y="0" width="13" height="13" fill="#fff"/><path d="M0.5 13 V0.5 H13" fill="none" stroke="#828282"/><path d="M1.5 12 V1.5 H12" fill="none" stroke="#000"/><path d="M12.5 0 V12.5 H0" fill="none" stroke="#fff"/><path d="M11.5 1 V11.5 H1" fill="none" stroke="#d9d9d9"/></svg>
<div class="t" style="left:1003px;top:394px;font-size:11px;color:#000;"><u>Z</u>ap</div>
<svg style="left:985px;top:417px" width="13" height="13" viewBox="0 0 13 13"><rect x="0" y="0" width="13" height="13" fill="#fff"/><path d="M0.5 13 V0.5 H13" fill="none" stroke="#828282"/><path d="M1.5 12 V1.5 H12" fill="none" stroke="#000"/><path d="M12.5 0 V12.5 H0" fill="none" stroke="#fff"/><path d="M11.5 1 V11.5 H1" fill="none" stroke="#d9d9d9"/></svg>
<div class="t" style="left:1003px;top:418px;font-size:11px;color:#000;">AFC</div>
<svg style="left:985px;top:441px" width="13" height="13" viewBox="0 0 13 13"><rect x="0" y="0" width="13" height="13" fill="#fff"/><path d="M0.5 13 V0.5 H13" fill="none" stroke="#828282"/><path d="M1.5 12 V1.5 H12" fill="none" stroke="#000"/><path d="M12.5 0 V12.5 H0" fill="none" stroke="#fff"/><path d="M11.5 1 V11.5 H1" fill="none" stroke="#d9d9d9"/><path d="M3 6 L5.5 8.5 L10 3.5" fill="none" stroke="#000" stroke-width="2"/></svg>
<div class="t" style="left:1003px;top:442px;font-size:11px;color:#000;"><u>F</u>reeze</div>
<svg style="left:927px;top:469px" width="13" height="13" viewBox="0 0 13 13"><rect x="0" y="0" width="13" height="13" fill="#fff"/><path d="M0.5 13 V0.5 H13" fill="none" stroke="#828282"/><path d="M1.5 12 V1.5 H12" fill="none" stroke="#000"/><path d="M12.5 0 V12.5 H0" fill="none" stroke="#fff"/><path d="M11.5 1 V11.5 H1" fill="none" stroke="#d9d9d9"/></svg>
<div class="t" style="left:945px;top:470px;font-size:11px;color:#000;">Tx First</div>
<div class="b" style="left:992px;top:463px;width:64px;height:25px;background:#d9d9d9;box-shadow:inset 1px 1px 0 #fff, inset -1px -1px 0 #000, inset -2px -2px 0 #828282;font-size:11px;padding-bottom:2px;letter-spacing:-0.2px">TxDF = 0</div>
<div class="b" style="left:922px;top:492px;width:65px;height:27px;background:#d9d9d9;box-shadow:inset 1px 1px 0 #fff, inset -1px -1px 0 #000, inset -2px -2px 0 #828282;font-size:11px;padding-bottom:1px"><u>G</u>en Msgs</div>
<div class="b" style="left:990px;top:492px;width:66px;height:27px;background:#ff0000;box-shadow:inset 0 0 0 2px #000;font-size:11px;color:#000;padding-bottom:1px"><u>A</u>uto is  ON</div>
<div style="left:993px;top:495px;width:61px;height:21px;border:1px dotted #000"></div>
<div style="left:1064px;top:385px;width:255px;height:154px;box-shadow:inset 1px 1px 0 #828282, inset -1px -1px 0 #fff, inset 2px 2px 0 #fff, inset -2px -2px 0 #828282;"></div>
<div style="left:1066px;top:390px;width:195px;height:17px;background:#fff;box-shadow:inset 1px 1px 0 #828282, inset -1px -1px 0 #fff;"><div class="t" style="left:2px;top:4px;font-size:11px;transform:scaleX(0.915);transform-origin:0 0">S79GJ GD0TEP IO74</div></div>
<svg style="left:1266px;top:392px" width="13" height="13" viewBox="0 0 13 13"><circle cx="6.5" cy="6.5" r="5.2" fill="#fff"/><path d="M10.7 3.0 A5.2 5.2 0 0 0 2.6 10.2" fill="none" stroke="#222" stroke-width="1.7"/><path d="M10.7 3.0 A5.5 5.5 0 0 1 2.6 10.2" fill="none" stroke="#f6f6f6" stroke-width="1"/></svg>
<div class="b" style="left:1290px;top:387px;width:27px;height:25px;background:#d9d9d9;box-shadow:inset 1px 1px 0 #fff, inset -1px -1px 0 #000, inset -2px -2px 0 #828282;font-size:11px">Tx<u>1</u></div>
<div style="left:1066px;top:415px;width:195px;height:17px;background:#fff;box-shadow:inset 1px 1px 0 #828282, inset -1px -1px 0 #fff;"><div class="t" style="left:2px;top:4px;font-size:11px;transform:scaleX(0.915);transform-origin:0 0">S79GJ GD0TEP IO74 OOO</div></div>
<svg style="left:1266px;top:417px" width="13" height="13" viewBox="0 0 13 13"><circle cx="6.5" cy="6.5" r="5.2" fill="#fff"/><path d="M10.7 3.0 A5.2 5.2 0 0 0 2.6 10.2" fill="none" stroke="#222" stroke-width="1.7"/><path d="M10.7 3.0 A5.5 5.5 0 0 1 2.6 10.2" fill="none" stroke="#f6f6f6" stroke-width="1"/></svg>
<div class="b" style="left:1290px;top:412px;width:27px;height:25px;background:#d9d9d9;box-shadow:inset 1px 1px 0 #fff, inset -1px -1px 0 #000, inset -2px -2px 0 #828282;font-size:11px">Tx<u>2</u></div>
<div style="left:1066px;top:440px;width:195px;height:17px;background:#fff;box-shadow:inset 1px 1px 0 #828282, inset -1px -1px 0 #fff;"><div class="t" style="left:2px;top:4px;font-size:11px;transform:scaleX(0.915);transform-origin:0 0">RO</div></div>
<svg style="left:1266px;top:442px" width="13" height="13" viewBox="0 0 13 13"><circle cx="6.5" cy="6.5" r="5.2" fill="#fff"/><path d="M10.7 3.0 A5.2 5.2 0 0 0 2.6 10.2" fill="none" stroke="#222" stroke-width="1.7"/><path d="M10.7 3.0 A5.5 5.5 0 0 1 2.6 10.2" fill="none" stroke="#f6f6f6" stroke-width="1"/></svg>
<div class="b" style="left:1290px;top:437px;width:27px;height:25px;background:#d9d9d9;box-shadow:inset 1px 1px 0 #fff, inset -1px -1px 0 #000, inset -2px -2px 0 #828282;font-size:11px">Tx<u>3</u></div>
<div style="left:1066px;top:465px;width:195px;height:17px;background:#fff;box-shadow:inset 1px 1px 0 #828282, inset -1px -1px 0 #fff;"><div class="t" style="left:2px;top:4px;font-size:11px;transform:scaleX(0.915);transform-origin:0 0">RRR</div></div>
<svg style="left:1266px;top:467px" width="13" height="13" viewBox="0 0 13 13"><circle cx="6.5" cy="6.5" r="5.2" fill="#fff"/><path d="M10.7 3.0 A5.2 5.2 0 0 0 2.6 10.2" fill="none" stroke="#222" stroke-width="1.7"/><path d="M10.7 3.0 A5.5 5.5 0 0 1 2.6 10.2" fill="none" stroke="#f6f6f6" stroke-width="1"/></svg>
<div class="b" style="left:1290px;top:462px;width:27px;height:25px;background:#d9d9d9;box-shadow:inset 1px 1px 0 #fff, inset -1px -1px 0 #000, inset -2px -2px 0 #828282;font-size:11px">Tx<u>4</u></div>
<div style="left:1066px;top:490px;width:195px;height:17px;background:#66ffff;box-shadow:inset 1px 1px 0 #828282, inset -1px -1px 0 #fff;"><div class="t" style="left:2px;top:4px;font-size:11px;transform:scaleX(0.915);transform-origin:0 0">73</div></div>
<svg style="left:1266px;top:492px" width="13" height="13" viewBox="0 0 13 13"><circle cx="6.5" cy="6.5" r="5.2" fill="#fff"/><path d="M10.7 3.0 A5.2 5.2 0 0 0 2.6 10.2" fill="none" stroke="#222" stroke-width="1.7"/><path d="M10.7 3.0 A5.5 5.5 0 0 1 2.6 10.2" fill="none" stroke="#f6f6f6" stroke-width="1"/><circle cx="6.5" cy="6.5" r="2" fill="#000"/></svg>
<div class="b" style="left:1290px;top:487px;width:27px;height:25px;background:#d9d9d9;box-shadow:inset 1px 1px 0 #fff, inset -1px -1px 0 #000, inset -2px -2px 0 #828282;font-size:11px">Tx<u>5</u></div>
<div style="left:1066px;top:515px;width:195px;height:17px;background:#fff;box-shadow:inset 1px 1px 0 #828282, inset -1px -1px 0 #fff;"><div class="t" style="left:2px;top:4px;font-size:11px;transform:scaleX(0.915);transform-origin:0 0">CQ GD0TEP IO74</div></div>
<svg style="left:1266px;top:517px" width="13" height="13" viewBox="0 0 13 13"><circle cx="6.5" cy="6.5" r="5.2" fill="#fff"/><path d="M10.7 3.0 A5.2 5.2 0 0 0 2.6 10.2" fill="none" stroke="#222" stroke-width="1.7"/><path d="M10.7 3.0 A5.5 5.5 0 0 1 2.6 10.2" fill="none" stroke="#f6f6f6" stroke-width="1"/></svg>
<div class="b" style="left:1290px;top:512px;width:27px;height:25px;background:#d9d9d9;box-shadow:inset 1px 1px 0 #fff, inset -1px -1px 0 #000, inset -2px -2px 0 #828282;font-size:11px">Tx<u>6</u></div>
<div style="left:660px;top:540px;width:660px;height:22px;box-shadow:inset 1px 1px 0 #828282, inset -1px -1px 0 #fff"></div>
<div style="left:655px;top:563px;width:671px;height:1px;background:#808080"></div>
<div class="b" style="left:662px;top:541px;width:81px;height:20px;background:#d9d9d9;box-shadow:inset 1px 1px 0 #828282, inset -1px -1px 0 #fff;font-size:11px;letter-spacing:-0.15px">1.0000 1.0000</div>
<div class="b" style="left:745px;top:541px;width:44px;height:20px;background:#19f7f7;box-shadow:inset 1px 1px 0 #828282, inset -1px -1px 0 #fff;font-size:11px;letter-spacing:-0.15px">JT65A</div>
<div class="b" style="left:790px;top:541px;width:86px;height:20px;background:#d9d9d9;box-shadow:inset 1px 1px 0 #828282, inset -1px -1px 0 #fff;font-size:11px;letter-spacing:-0.15px">Freeze DF: 175</div>
<div class="b" style="left:878px;top:541px;width:85px;height:20px;background:#d9d9d9;box-shadow:inset 1px 1px 0 #828282, inset -1px -1px 0 #fff;font-size:11px;letter-spacing:-0.15px">Rx noise:  0 dB</div>
<div class="b" style="left:965px;top:541px;width:87px;height:20px;background:#d9d9d9;box-shadow:inset 1px 1px 0 #828282, inset -1px -1px 0 #fff;font-size:11px;letter-spacing:-0.15px">T/R Period: 60 s</div>
<div class="b" style="left:1260px;top:541px;width:58px;height:20px;background:#66ffff;box-shadow:inset 1px 1px 0 #828282, inset -1px -1px 0 #fff;font-size:11px;letter-spacing:-0.15px">Txing:  73</div>
<div style="left:1324px;top:0px;width:1px;height:564px;background:#5a5a5a"></div>
<div style="left:1325px;top:0px;width:1px;height:564px;background:#d4d4d4"></div>
</body></html>
